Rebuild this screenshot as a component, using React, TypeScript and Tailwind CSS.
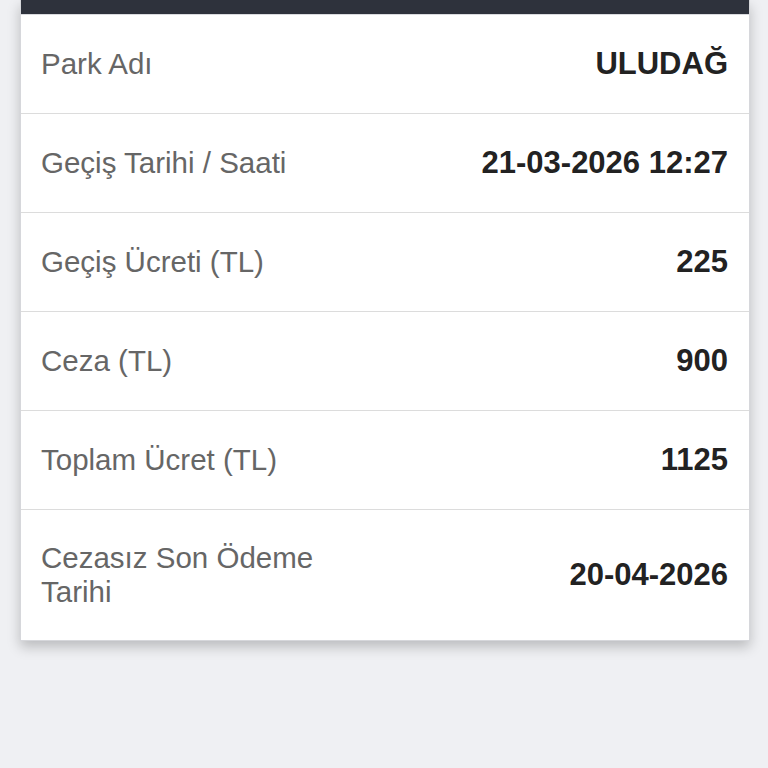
import React from 'react';

const rows = [
  { label: 'Park Adı', value: 'ULUDAĞ' },
  { label: 'Geçiş Tarihi / Saati', value: '21-03-2026 12:27' },
  { label: 'Geçiş Ücreti (TL)', value: '225' },
  { label: 'Ceza (TL)', value: '900' },
  { label: 'Toplam Ücret (TL)', value: '1125' },
  { label: 'Cezasız Son Ödeme Tarihi', value: '20-04-2026' },
];

export default function App() {
  return (
    <div className="min-h-[768px] bg-[#eff0f3] font-['Liberation_Sans',Arial,sans-serif]">
      <div className="ml-[20px] w-[730px] bg-white shadow-[0_6px_12px_rgba(0,0,0,0.22)] border-x border-b border-[#d6d7db]">
        <div className="h-[15px] bg-[#2e323c] border-b border-[#d9dade]" />
        {rows.map((r, i) => (
          <div
            key={r.label}
            className={
              'flex items-center justify-between pl-[20px] pr-[21px] ' +
              (i === rows.length - 1 ? 'h-[130px]' : 'h-[99px] border-b border-[#dcdcdc]')
            }
          >
            <span className="max-w-[320px] text-[29.5px] leading-[34px] text-[#666666]">{r.label}</span>
            <span className="text-[31px] font-bold text-[#222222]">{r.value}</span>
          </div>
        ))}
      </div>
    </div>
  );
}
